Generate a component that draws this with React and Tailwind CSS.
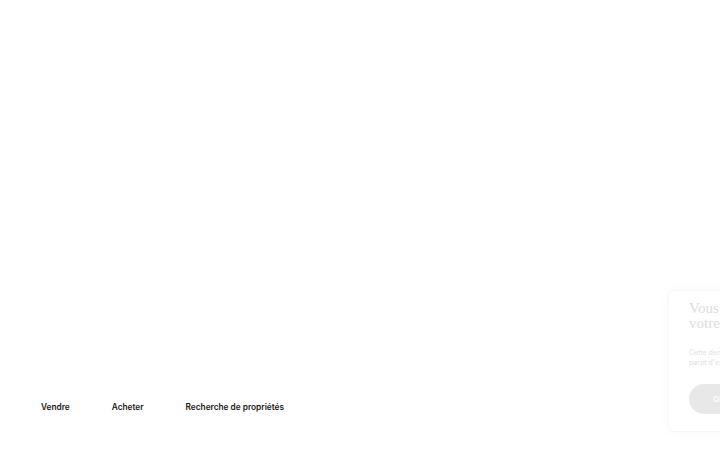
import React from "react";

const links = ["Vendre", "Acheter", "Recherche de propriétés"];

export default function App() {
  return (
    <div className="relative w-[720px] h-[450px] overflow-hidden bg-white">
      <div className="flex flex-col h-full">
        <div className="flex-1" />
        <nav
          className="flex items-center gap-[42px] pl-[41px] pb-[39px] text-[8.3px] font-semibold text-[#1a1a1a]"
          style={{ fontFamily: "Inter, 'Noto Sans', sans-serif" }}
        >
          {links.map((l) => (
            <a key={l} href="#" className="leading-none">
              {l}
            </a>
          ))}
        </nav>
      </div>

      <div className="absolute left-[668px] top-[290px] w-[300px] h-[142px] bg-white rounded-l-md shadow-[0_0_12px_rgba(0,0,0,0.03)] border border-[#f7f7f7] px-5 pt-[10px]">
        <h2
          className="text-[15px] leading-[15px] font-normal text-[#dcdcdc]"
          style={{ fontFamily: "'Liberation Serif', 'DejaVu Serif', serif" }}
        >
          Vous avez un projet ?<br />
          votre estimation offerte
        </h2>
        <p
          className="mt-[17px] text-[7px] leading-[10px] text-[#e0e0e0]"
          style={{ fontFamily: "Inter, sans-serif" }}
        >
          Cette demande ne vous engage à rien,
          <br />
          parpt d'expert sous 24 heures.
        </p>
        <button
          className="mt-[16px] h-[30px] w-[120px] rounded-full bg-[#e8e8e8] text-white text-[8px] font-semibold pl-[24px] text-left"
          style={{ fontFamily: "Inter, sans-serif" }}
        >
          Obtenir
        </button>
      </div>
    </div>
  );
}
